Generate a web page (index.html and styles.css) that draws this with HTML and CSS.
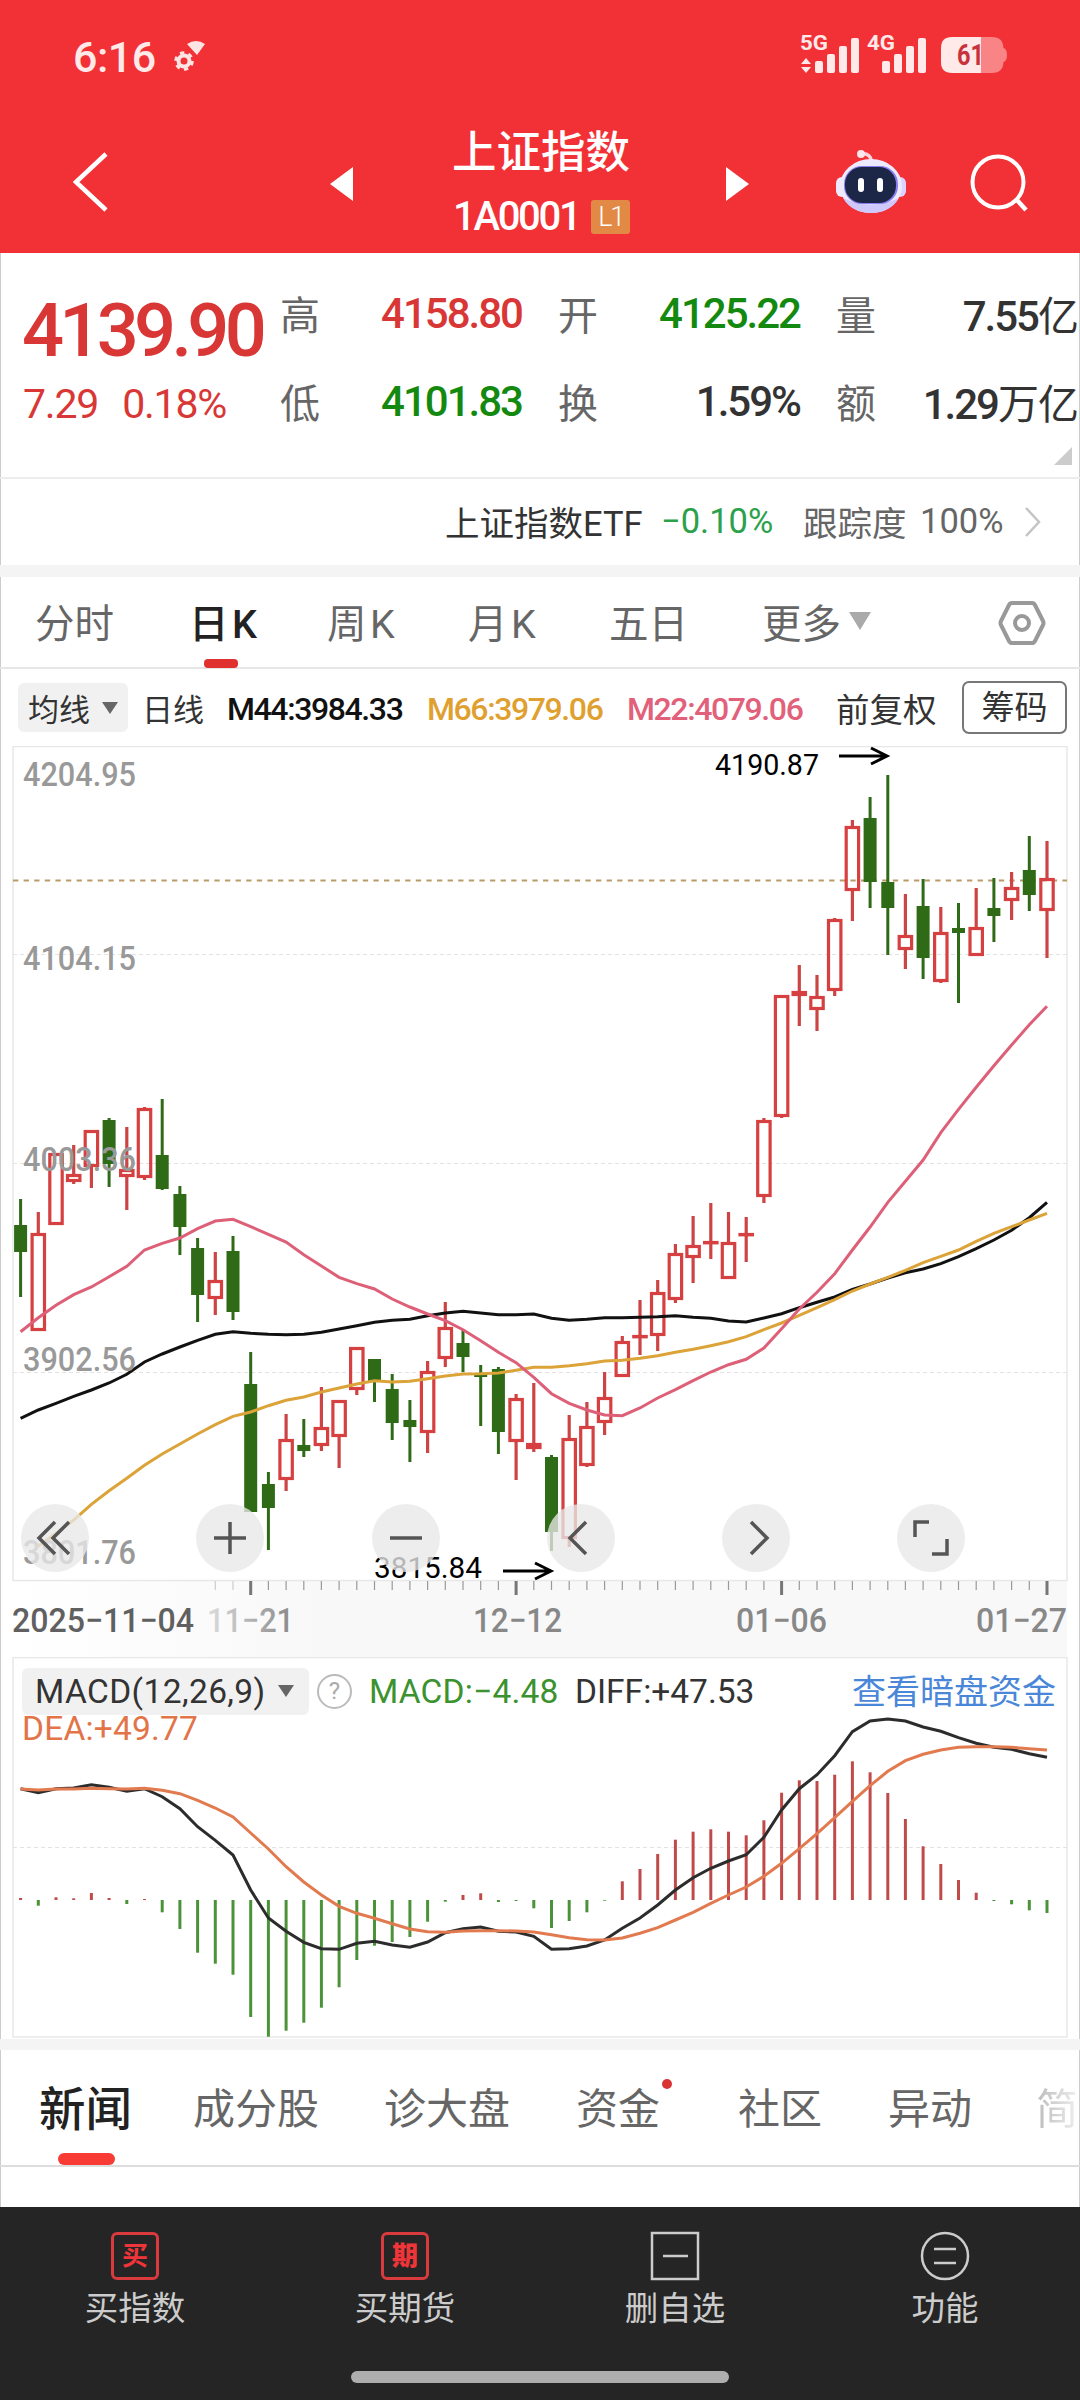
FILE: index.html
```
<!DOCTYPE html>
<html lang="zh-CN">
<head>
    <meta charset="UTF-8">
    <title>上证指数</title>
    <link rel="stylesheet" href="styles.css">
</head>
<body>
<div class="app">
    <header class="header">
        <div class="status">
            <span class="time">6:16</span>
            <svg class="status-left" width="34" height="34" viewBox="0 0 34 34">
                <circle cx="11" cy="22" r="5.500" fill="none" stroke="#ffe4e4" stroke-width="4"/>
                <circle cx="11" cy="22" r="8.300" fill="none" stroke="#ffe4e4" stroke-width="3" stroke-dasharray="4.350 4.350"/>
                <path d="M14 5 Q23 -1 32 5 L24 16 Z" fill="#ffe4e4"/>
            </svg>
            <svg class="status-right" width="210" height="56" viewBox="0 -12 210 56">
                <g fill="#ffe9e9">
                    <text x="1" y="16.5" class="net" textLength="28" lengthAdjust="spacingAndGlyphs">5G</text>
                    <path d="M7 25 L12 31 H2 Z M7 40 L12 34 H2 Z"/>
                    <rect x="16" y="28" width="8" height="12" rx="2"/>
                    <rect x="28" y="21" width="8" height="19" rx="2"/>
                    <rect x="40" y="13" width="8" height="27" rx="2"/>
                    <rect x="52" y="5" width="8" height="35" rx="2"/>
                    <text x="68" y="16.5" class="net" textLength="28" lengthAdjust="spacingAndGlyphs">4G</text>
                    <rect x="83" y="28" width="8" height="12" rx="2"/>
                    <rect x="95" y="21" width="8" height="19" rx="2"/>
                    <rect x="107" y="13" width="8" height="27" rx="2"/>
                    <rect x="119" y="5" width="8" height="35" rx="2"/>
                    <path d="M153 4 H182 V40 H153 Q142 40 142 29 V15 Q142 4 153 4 Z"/>
                </g>
                <path d="M182 4 H193 Q204 4 204.500 15 Q208 16 208 22 Q208 28 204.500 29 Q204 40 193 40 H182 Z" fill="#f98486"/>
                <text x="158" y="32" class="battery" textLength="27" lengthAdjust="spacingAndGlyphs">61</text>
            </svg>
        </div>
        <div class="nav">
            <svg class="back" width="40" height="64" viewBox="0 0 40 64"><path d="M34 4 L4 32 L34 60" fill="none" stroke="#fff" stroke-width="4.500"/></svg>
            <svg class="step" width="24" height="34" viewBox="0 0 24 34"><path d="M23 0 V34 L0 17 Z" fill="#fff"/></svg>
            <div class="title">
                <div class="name">上证指数</div>
                <div class="code">1A0001<span class="level">L1</span></div>
            </div>
            <svg class="step" width="24" height="34" viewBox="0 0 24 34"><path d="M0 0 V34 L23 17 Z" fill="#fff"/></svg>
            <svg class="robot" width="72" height="66" viewBox="0 0 72 66">
                <path d="M24 5 Q34 3 36 13" fill="none" stroke="#ffd3dc" stroke-width="3.500"/>
                <circle cx="25" cy="5" r="4" fill="#ffe6ec"/>
                <rect x="0" y="28" width="12" height="20" rx="6" fill="#efe9ff"/>
                <rect x="58" y="28" width="12" height="20" rx="6" fill="#dcd4ff"/>
                <ellipse cx="35" cy="37" rx="31" ry="27" fill="#eeeafd"/>
                <path d="M7 49 Q35 62 63 49 Q54 64 35 64 Q16 64 7 49" fill="#cfc8fa"/>
                <rect x="8" y="17" width="54" height="38" rx="18" fill="#8a7df0"/>
                <rect x="9" y="18" width="51" height="36" rx="17" fill="#1c2747"/>
                <rect x="22" y="29" width="6" height="14" rx="3" fill="#fff"/>
                <rect x="41" y="29" width="6" height="14" rx="3" fill="#fff"/>
            </svg>
            <svg class="search" width="60" height="60" viewBox="0 0 60 60"><circle cx="28" cy="28" r="25.500" fill="none" stroke="#fff" stroke-width="4"/><path d="M46 45 L56 56" stroke="#fff" stroke-width="4.500"/></svg>
        </div>
    </header>

    <section class="quote">
        <div class="last red">4139.90</div>
        <div class="change red"><span>7.29</span><span>0.18%</span></div>
        <span class="label">高</span><span class="value red">4158.80</span>
        <span class="label">开</span><span class="value green">4125.22</span>
        <span class="label">量</span><span class="value">7.55<i>亿</i></span>
        <span class="label">低</span><span class="value green">4101.83</span>
        <span class="label">换</span><span class="value">1.59%</span>
        <span class="label">额</span><span class="value">1.29<i>万亿</i></span>
        <span class="corner"></span>
    </section>

    <section class="etf">
        <span class="etf-name">上证指数ETF</span>
        <span class="etf-change">−0.10%</span>
        <span class="etf-track">跟踪度</span>
        <span class="etf-percent">100%</span>
        <svg width="18" height="30" viewBox="0 0 18 30"><path d="M2 1 L15 15 L2 29" fill="none" stroke="#c4c4c4" stroke-width="2.500"/></svg>
    </section>

    <nav class="periods">
        <span>分时</span>
        <span class="k active">日K</span>
        <span class="k">周K</span>
        <span class="k">月K</span>
        <span>五日</span>
        <span>更多<b class="arrow"></b></span>
        <svg width="48" height="46" viewBox="0 0 48 46"><path d="M14 3 H34 Q36 3 37 5 L45 21 Q46 23 45 25 L37 41 Q36 43 34 43 H14 Q12 43 11 41 L3 25 Q2 23 3 21 L11 5 Q12 3 14 3 Z" fill="none" stroke="#999" stroke-width="4"/><circle cx="24" cy="23" r="7" fill="none" stroke="#999" stroke-width="4"/></svg>
    </nav>

    <div class="averages">
        <span class="picker">均线<b class="arrow"></b></span>
        <span class="line-type">日线</span>
        <span class="ma m44">M44:3984.33</span>
        <span class="ma m66">M66:3979.06</span>
        <span class="ma m22">M22:4079.06</span>
        <span class="adjust">前复权</span>
        <span class="chips">筹码</span>
    </div>

    <section class="chart">
        <svg id="kline" width="1080" height="911" viewBox="0 746 1080 911"></svg>
        <div class="tools">
            <button><svg viewBox="0 0 68 68"><path d="M34 18 L18 34 L34 50 M48 18 L32 34 L48 50"/></svg></button>
            <button><svg viewBox="0 0 68 68"><path d="M34 18 V50 M18 34 H50"/></svg></button>
            <button><svg viewBox="0 0 68 68"><path d="M18 34 H50"/></svg></button>
            <button><svg viewBox="0 0 68 68"><path d="M39 18 L23 34 L39 50"/></svg></button>
            <button><svg viewBox="0 0 68 68"><path d="M29 18 L45 34 L29 50"/></svg></button>
            <button><svg viewBox="0 0 68 68"><path d="M32 18 H18 V33 M35 50 H50 V35"/></svg></button>
        </div>
    </section>

    <section class="chart">
        <svg id="macd" width="1080" height="382" viewBox="0 1657 1080 382"></svg>
        <div class="macd-head">
            <div class="macd-row">
                <span class="picker indicator">MACD(12,26,9)<b class="arrow"></b></span>
                <span class="help">?</span>
                <span class="macd-value">MACD:−4.48</span>
                <span class="diff-value">DIFF:+47.53</span>
                <span class="link">查看暗盘资金</span>
            </div>
            <div class="dea-value">DEA:+49.77</div>
        </div>
    </section>

    <nav class="sections">
        <span class="active">新闻</span>
        <span>成分股</span>
        <span>诊大盘</span>
        <span class="dot">资金</span>
        <span>社区</span>
        <span>异动</span>
        <span class="faded">简</span>
    </nav>
    <div class="news"></div>

    <footer class="footer">
        <div class="actions">
            <div class="action"><span class="box">买</span>买指数</div>
            <div class="action"><span class="box bold">期</span>买期货</div>
            <div class="action"><svg width="50" height="50" viewBox="0 0 50 50"><path d="M2 2 H48 V48 H2 Z M13 25 H38"/></svg>删自选</div>
            <div class="action"><svg width="50" height="50" viewBox="0 0 50 50"><circle cx="25" cy="25" r="23"/><path d="M14 18 H36 M14 32 H36"/></svg>功能</div>
        </div>
        <div class="home"></div>
    </footer>
</div>
<script src="chart.js"></script>
</body>
</html>
```
FILE: styles.css
```
body {
    margin: 0;
    background: #fff;
    font-family: Roboto, "Noto Sans CJK SC", sans-serif;
    color: #333;
}

.app {
    width: 1080px;
    height: 2400px;
    box-sizing: border-box;
    overflow: hidden;
    box-shadow: inset 1px 0 #ccc, inset -1px 0 #ccc;
}

.red { color: #d93636; }
.green { color: #14890f !important; }

/* header */
.header {
    height: 253px;
    background: #f13136;
    color: #fff;
}

.status {
    display: flex;
    height: 110px;
    padding-left: 73px;
    box-sizing: border-box;
}

.time {
    width: 100px;
    margin-top: 31px;
    font-size: 43px;
    line-height: 52px;
    font-weight: 500;
    letter-spacing: -.5px;
    color: #ffe9e9;
}

.status-left { margin-top: 39px; }
.status-right { margin: 21px 0 0 592px; }

.net { font-size: 21px; font-weight: 700; }
.battery { font-size: 30px; font-weight: 700; fill: #c8323a; }

.nav {
    display: grid;
    grid-template-columns: 330px 122px 274px 110px 134px 110px;
    align-items: center;
    height: 143px;
    box-sizing: border-box;
}

.back { margin-left: 72px; }
.step { margin-top: 4px; }

.title { width: 178px; }

.name {
    font-size: 44.500px;
    line-height: 56px;
    font-weight: 500;
    margin-top: 7px;
    white-space: nowrap;
}

.code {
    display: flex;
    align-items: center;
    font-size: 40px;
    line-height: 56px;
    font-weight: 500;
    letter-spacing: -2.3px;
    margin: 8px 0 0 1px;
    height: 56px;
}

.level {
    width: 39px;
    height: 34px;
    margin-left: auto;
    border-radius: 3px;
    background: #e28a45;
    font-size: 27px;
    line-height: 34px;
    text-align: center;
    font-weight: 300;
}

.robot { margin-top: 0; }
.search { margin: 4px 0 0 0; }

/* quote */
.quote {
    display: grid;
    grid-template-columns: 280px 42px 200px 36px 42px 200px 36px 42px 200px;
    grid-template-rows: 88px 88px 1fr;
    align-items: center;
    height: 226px;
    padding-top: 16px;
    box-sizing: border-box;
    border-bottom: 2px solid #ececec;
}

.last {
    grid-area: 1 / 1;
    padding: 35px 0 0 22px;
    font-size: 74px;
    line-height: 80px;
    font-weight: 500;
    letter-spacing: -4.7px;
}

.change {
    grid-area: 2 / 1;
    display: flex;
    gap: 24px;
    padding: 6px 0 0 23px;
    font-size: 41px;
    letter-spacing: -1.2px;
}

.label { font-size: 40px; color: #666; }

.value {
    font-size: 42px;
    letter-spacing: -2px;
    text-align: right;
    font-weight: 500;
    white-space: nowrap;
}

.value i {
    font-style: normal;
    font-weight: 400;
    font-size: 41px;
    letter-spacing: -1px;
}

.label:nth-child(3), .label:nth-child(9) { grid-column: 2; }
.label:nth-child(5), .label:nth-child(11) { grid-column: 5; }
.label:nth-child(7), .label:nth-child(13) { grid-column: 8; }

.corner {
    grid-area: 3 / 9;
    justify-self: end;
    align-self: end;
    margin: 0 6px 12px 0;
    border-left: 18px solid transparent;
    border-bottom: 18px solid #ccc;
}

/* etf */
.etf {
    display: flex;
    align-items: center;
    height: 86px;
    font-size: 34.500px;
    padding-left: 445px;
    border-bottom: 12px solid #f4f4f4;
    white-space: nowrap;
}

.etf span { margin-top: -2px; }
.etf-name { width: 216px; }
.etf-change { width: 142px; color: #2ba14b; }
.etf-track { width: 117px; color: #666; }
.etf-percent { width: 104px; color: #666; }

/* periods */
.periods {
    display: grid;
    grid-template-columns: 154px 138px 141px 141px 153px 235px auto;
    align-items: center;
    height: 92px;
    padding-left: 35px;
    box-sizing: border-box;
    border-bottom: 2px solid #e6e6e6;
    font-size: 39.500px;
    color: #666;
}

.periods span {
    display: flex;
    align-items: center;
    height: 90px;
    padding-bottom: 4px;
    box-sizing: border-box;
}

.periods svg { margin: 1px 0 0 1px; }

.periods .k { letter-spacing: 3.5px; }

.periods .active {
    position: relative;
    color: #222;
    font-weight: 500;
}

.periods .active::after {
    content: "";
    position: absolute;
    left: 15px;
    bottom: -1px;
    width: 34px;
    height: 9px;
    border-radius: 4px;
    background: #e0302f;
}

.arrow {
    display: inline-block;
    border: 8.500px solid transparent;
    border-top: 12px solid #666;
    border-bottom: 0;
    margin-left: 12px;
}

.periods .arrow {
    border-width: 18px 11px 0;
    border-top-color: #aaa;
    margin: 2px 0 0 8px;
}

/* averages */
.averages {
    display: flex;
    align-items: center;
    height: 77px;
    padding-left: 18px;
    font-size: 31px;
    white-space: nowrap;
}

.picker {
    display: flex;
    align-items: center;
    width: 100px;
    height: 49px;
    padding-left: 10px;
    border-radius: 6px;
    background: #f1f1f1;
}

.line-type { width: 85px; margin-left: 14px; }

.ma {
    width: 200px;
    padding-top: 3px;
    font-size: 32px;
    letter-spacing: -1.4px;
    font-weight: 500;
}

.m44 { color: #111; }
.m66 { color: #dfa030; }
.m22 { color: #e2607a; width: 209px; }
.adjust { width: 126px; font-size: 33.500px; }

.chips {
    width: 101px;
    height: 49px;
    border: 2px solid #777;
    border-radius: 7px;
    font-size: 33px;
    line-height: 49px;
    text-align: center;
}

/* charts */
.chart { display: grid; }
.chart > * { grid-area: 1 / 1; }
.chart svg { display: block; }

.axis { font-size: 34px; fill: #999; font-weight: 500; }
.date { font-size: 34px; fill: #888; font-weight: 500; }
.mark { font-size: 30px; fill: #000; }

.tools {
    display: flex;
    align-self: end;
    gap: 107.300px;
    padding: 0 0 85px 21px;
}

.tools button {
    width: 68px;
    height: 68px;
    padding: 0;
    border: 0;
    border-radius: 50%;
    background: rgba(232, 232, 232, .78);
}

.tools path {
    fill: none;
    stroke: #555;
    stroke-width: 3.500;
}

.macd-head { padding: 11px 24px 0 22px; font-size: 33.500px; }

.macd-row {
    display: flex;
    align-items: center;
    height: 46px;
    white-space: nowrap;
}

.indicator {
    width: 274px;
    height: 47px;
    padding-left: 13px;
    letter-spacing: .4px;
}

.help {
    width: 31px;
    height: 31px;
    margin: 0 17px 0 8px;
    border: 2px solid #bbb;
    border-radius: 50%;
    font-size: 24px;
    line-height: 31px;
    text-align: center;
    color: #aaa;
}

.macd-value { width: 206px; color: #3b922e; letter-spacing: .2px; }
.diff-value { color: #333; }
.link { margin: -3px 0 0 auto; font-size: 34px; color: #4a87d8; }
.dea-value { color: #e27448; line-height: 30px; letter-spacing: .2px; }

/* sections */
.sections {
    display: grid;
    grid-template-columns: 154px 191px 192px 162px 150px 148px 43px;
    align-items: center;
    height: 128px;
    padding: 0 0 5px 39px;
    box-sizing: border-box;
    border-top: 11px solid #f4f4f4;
    border-bottom: 2px solid #ddd;
    font-size: 42px;
    color: #666;
    white-space: nowrap;
}

.sections span { position: relative; }

.sections .active {
    font-size: 46.500px;
    font-weight: 500;
    color: #222;
}

.sections .active::after {
    content: "";
    position: absolute;
    left: 19px;
    bottom: -26px;
    width: 57px;
    height: 12px;
    border-radius: 6px;
    background: #f83c35;
}

.dot::after {
    content: "";
    position: absolute;
    left: 86px;
    top: 4px;
    width: 10px;
    height: 10px;
    border-radius: 50%;
    background: #d93434;
}

.faded {
    overflow: hidden;
    background: linear-gradient(90deg, #bbb, #f0f0f0);
    background-clip: text;
    color: transparent;
}

.news { height: 40px; }

/* footer */
.footer {
    height: 193px;
    background: #252525;
}

.actions {
    display: grid;
    grid-template-columns: repeat(4, 270px);
    height: 164px;
}

.action {
    display: flex;
    flex-direction: column;
    align-items: center;
    padding-top: 24px;
    font-size: 33.500px;
    line-height: 56px;
    color: #ccc;
}

.action svg { fill: none; stroke: #ccc; stroke-width: 2.500; }

.box {
    width: 42px;
    height: 42px;
    margin: 1px 0;
    border: 3px solid #d93a3e;
    border-radius: 6px;
    font-size: 26px;
    line-height: 42px;
    text-align: center;
    color: #f0353a;
    font-weight: 700;
}

.bold { font-weight: 900; }

.home {
    width: 378px;
    height: 12px;
    margin: 0 auto;
    border-radius: 6px;
    background: #aeaeae;
}
```
FILE: chart.js
```
var STEP = 17.697;
var FIRST = 20.6;

function x(i) {
    return +(FIRST + STEP * i).toFixed(1);
}

// color, high, body top, body bottom, low
var candles = [
    ["g", 1199, 1225, 1252, 1297], ["r", 1212, 1233, 1331, 1331], ["r", 1153, 1153, 1225, 1225],
    ["r", 1145, 1174, 1182, 1184], ["r", 1130, 1130, 1167, 1188], ["g", 1118, 1120, 1164, 1187],
    ["r", 1127, 1169, 1177, 1210], ["r", 1107, 1108, 1178, 1180], ["g", 1099, 1155, 1189, 1190],
    ["g", 1186, 1194, 1227, 1255], ["g", 1238, 1248, 1295, 1322], ["r", 1252, 1280, 1299, 1315],
    ["g", 1236, 1251, 1312, 1320], ["g", 1352, 1384, 1512, 1512], ["g", 1472, 1484, 1508, 1550],
    ["r", 1414, 1439, 1480, 1491], ["g", 1419, 1445, 1451, 1457], ["r", 1387, 1427, 1446, 1451],
    ["r", 1400, 1400, 1437, 1468], ["r", 1347, 1347, 1390, 1395], ["g", 1359, 1359, 1381, 1402],
    ["g", 1374, 1389, 1423, 1440], ["g", 1400, 1420, 1427, 1462], ["r", 1361, 1371, 1433, 1453],
    ["r", 1302, 1327, 1359, 1367], ["g", 1330, 1343, 1357, 1372], ["g", 1365, 1373, 1377, 1426],
    ["g", 1367, 1369, 1432, 1454], ["r", 1394, 1398, 1442, 1480], ["r", 1383, 1443, 1449, 1452],
    ["g", 1455, 1457, 1532, 1551], ["r", 1415, 1438, 1539, 1547], ["r", 1402, 1426, 1466, 1467],
    ["r", 1372, 1397, 1423, 1435], ["r", 1336, 1341, 1377, 1377], ["r", 1300, 1335, 1338, 1355],
    ["r", 1280, 1292, 1336, 1351], ["r", 1244, 1253, 1300, 1303], ["r", 1216, 1245, 1258, 1283],
    ["r", 1203, 1241, 1244, 1259], ["r", 1212, 1242, 1279, 1279], ["r", 1217, 1233, 1236, 1262],
    ["r", 1118, 1120, 1197, 1203], ["r", 995, 995, 1117, 1118], ["r", 965, 991, 996, 1026],
    ["r", 975, 996, 1010, 1031], ["r", 918, 919, 991, 996], ["r", 820, 826, 891, 921],
    ["g", 797, 818, 882, 908], ["g", 775, 882, 908, 955], ["r", 894, 935, 950, 969],
    ["g", 879, 906, 958, 979], ["r", 907, 932, 982, 983], ["g", 903, 928, 933, 1003],
    ["r", 888, 927, 956, 956], ["g", 878, 908, 916, 942], ["r", 872, 887, 901, 920],
    ["g", 836, 870, 895, 911], ["r", 841, 878, 911, 958]
];

// line values are thirds of a pixel below the line's base
var m44 = [775, 750, 730, 709, 690, 669, 643, 606, 582, 561, 541, 523, 515, 520, 523, 524, 523, 517, 507, 497, 487, 481, 478, 467, 459, 454, 459, 464, 464, 462, 475, 481, 478, 473, 473, 472, 470, 467, 472, 475, 483, 486, 474, 461, 443, 427, 411, 388, 372, 354, 338, 327, 311, 290, 266, 240, 211, 173, 127];
var m66 = [null, 1158, 1120, 1080, 1033, 992, 955, 916, 882, 852, 822, 794, 769, 756, 737, 721, 711, 696, 684, 672, 662, 666, 664, 656, 648, 642, 641, 639, 631, 622, 622, 617, 611, 603, 601, 595, 587, 577, 568, 557, 545, 530, 509, 489, 466, 443, 419, 393, 372, 352, 331, 308, 289, 270, 244, 220, 200, 180, 160];
var m22 = [515, 473, 436, 404, 381, 350, 319, 270, 250, 234, 206, 183, 178, 200, 223, 246, 284, 318, 352, 371, 387, 417, 441, 462, 482, 509, 542, 577, 608, 652, 701, 730, 750, 765, 767, 744, 714, 689, 662, 636, 614, 598, 564, 506, 447, 397, 341, 270, 201, 127, 64, 0, -82, -152, -218, -283, -345, -406, -461];
var diff = [446, 458, 446, 444, 434, 442, 454, 446, 470, 506, 560, 601, 645, 750, 834, 874, 907, 926, 928, 910, 904, 915, 922, 906, 878, 866, 861, 874, 876, 889, 928, 926, 918, 900, 865, 834, 795, 750, 713, 685, 663, 644, 592, 510, 446, 404, 347, 275, 243, 237, 243, 261, 274, 293, 310, 322, 328, 341, 352];
var dea = [447, 450, 447, 447, 445, 446, 447, 445, 451, 461, 481, 504, 531, 579, 627, 680, 726, 765, 799, 820, 835, 851, 867, 875, 877, 873, 872, 872, 873, 876, 884, 893, 899, 900, 894, 880, 863, 840, 817, 790, 765, 741, 709, 670, 626, 581, 533, 484, 437, 394, 362, 343, 330, 322, 320, 320, 322, 326, 330];
var bars = [774, 797, 772, 775, 759, 774, 792, 777, 817, 867, 938, 971, 1004, 1131, 1190, 1172, 1148, 1103, 1042, 960, 917, 906, 891, 845, 785, 765, 760, 786, 783, 805, 864, 843, 817, 782, 724, 687, 642, 599, 575, 568, 575, 586, 541, 458, 421, 423, 404, 364, 397, 459, 537, 619, 672, 720, 758, 783, 793, 811, 819];

function rect(left, top, w, h, attrs) {
    return '<rect x="' + left + '" y="' + top + '" width="' + w + '" height="' + h + '" ' + attrs + '/>';
}

function line(x1, y1, x2, y2, color, width, extra) {
    return '<path d="M' + x1 + ' ' + y1 + 'L' + x2 + ' ' + y2 + '" stroke="' + color + '" stroke-width="' + width + '" ' + (extra || '') + '/>';
}

function curve(values, base, color) {
    var points = [];
    values.forEach(function (v, i) {
        if (v !== null) {
            points.push(x(i) + "," + (base + v / 3).toFixed(1));
        }
    });
    return '<polyline points="' + points.join(" ") + '" fill="none" stroke="' + color + '" stroke-width="3"/>';
}

function text(left, y, w, cls, str, extra) {
    return '<text x="' + left + '" y="' + y + '" textLength="' + w + '" lengthAdjust="spacingAndGlyphs" class="' + cls + '" ' + (extra || '') + '>' + str + '</text>';
}

function drawKline() {
    var s = '<defs><linearGradient id="fade"><stop offset="0" stop-color="#fff"/><stop offset=".3" stop-color="#f8f8f8"/></linearGradient>' +
        '<linearGradient id="fadeText"><stop offset="0" stop-color="#ddd"/><stop offset="1" stop-color="#888"/></linearGradient></defs>';
    s += rect(13, 1581, 1054, 76, 'fill="url(#fade)"');
    s += rect(13, 746.5, 1054, 834, 'fill="#fff" stroke="#e8e8e8" stroke-width="1.5"');
    [954.5, 1163.5, 1372.5].forEach(function (y) {
        s += line(13, y, 1067, y, "#e2e2e2", 1, 'stroke-dasharray="4 3"');
    });
    s += line(13, 880.5, 1067, 880.5, "#b89c68", 1.8, 'stroke-dasharray="5.3 5.3"');

    candles.forEach(function (c, i) {
        var cx = x(i);
        if (c[0] == "g") {
            s += line(cx, c[1], cx, c[4], "#2f6a16", 3);
            s += rect(cx - 6.5, c[2], 13, c[3] - c[2], 'fill="#2f6a16"');
        } else {
            s += line(cx, c[1], cx, c[2], "#cc4444", 3.2);
            s += line(cx, c[3], cx, c[4], "#cc4444", 3.2);
            s += rect(cx - 6.2, c[2] + 1.5, 12.4, Math.max(c[3] - c[2] - 3, 0.3), 'fill="none" stroke="#d64040" stroke-width="3.2"');
        }
    });

    s += curve(m44, 1160, "#111");
    s += curve(m66, 1160, "#dba338");
    s += curve(m22, 1160, "#dd6078");

    s += text(23, 786, 113, "axis", "4204.95");
    s += text(23, 970, 113, "axis", "4104.15");
    s += text(23, 1170.5, 113, "axis", "4003.36");
    s += text(23, 1371, 113, "axis", "3902.56");
    s += text(23, 1564, 113, "axis", "3801.76");

    s += text(715, 775, 104, "mark", "4190.87");
    s += '<path d="M839 756H887M871 748L887 756L871 764" fill="none" stroke="#000" stroke-width="3"/>';
    s += text(374, 1578, 108, "mark", "3815.84");
    s += '<path d="M503 1571H551M535 1563L551 1571L535 1579" fill="none" stroke="#000" stroke-width="3"/>';

    // date axis
    for (var i = 11; i < 59; i++) {
        if ((i - 13) % 15 == 0) {
            s += line(x(i), 1581, x(i), 1595, "#777", 3);
        } else {
            s += line(x(i), 1581, x(i), 1590, i < 13 ? "#ccc" : "#999", 1.2);
        }
    }
    s += text(12, 1631.5, 182, "date", "2025−11−04", 'style="fill:#606060"');
    s += text(207, 1631.5, 87, "date", "11−21", 'style="fill:url(#fadeText)"');
    s += text(473, 1631.5, 89, "date", "12−12");
    s += text(736, 1631.5, 91, "date", "01−06");
    s += text(976, 1631.5, 91, "date", "01−27");
    document.getElementById("kline").innerHTML = s;
}

function drawMacd() {
    var s = rect(13, 1657.5, 1054, 379.5, 'fill="#fff" stroke="#e8e8e8" stroke-width="1.5"');
    s += line(13, 1847.5, 1067, 1847.5, "#e2e2e2", 1, 'stroke-dasharray="4 3"');
    bars.forEach(function (v, i) {
        s += line(x(i), 1900, x(i), (1640 + v / 3).toFixed(1), v > 780 ? "#4a9338" : "#c04a4a", 3);
    });
    s += curve(diff, 1640, "#2c2c2c");
    s += curve(dea, 1640, "#e27a50");
    document.getElementById("macd").innerHTML = s;
}

drawKline();
drawMacd();
```
